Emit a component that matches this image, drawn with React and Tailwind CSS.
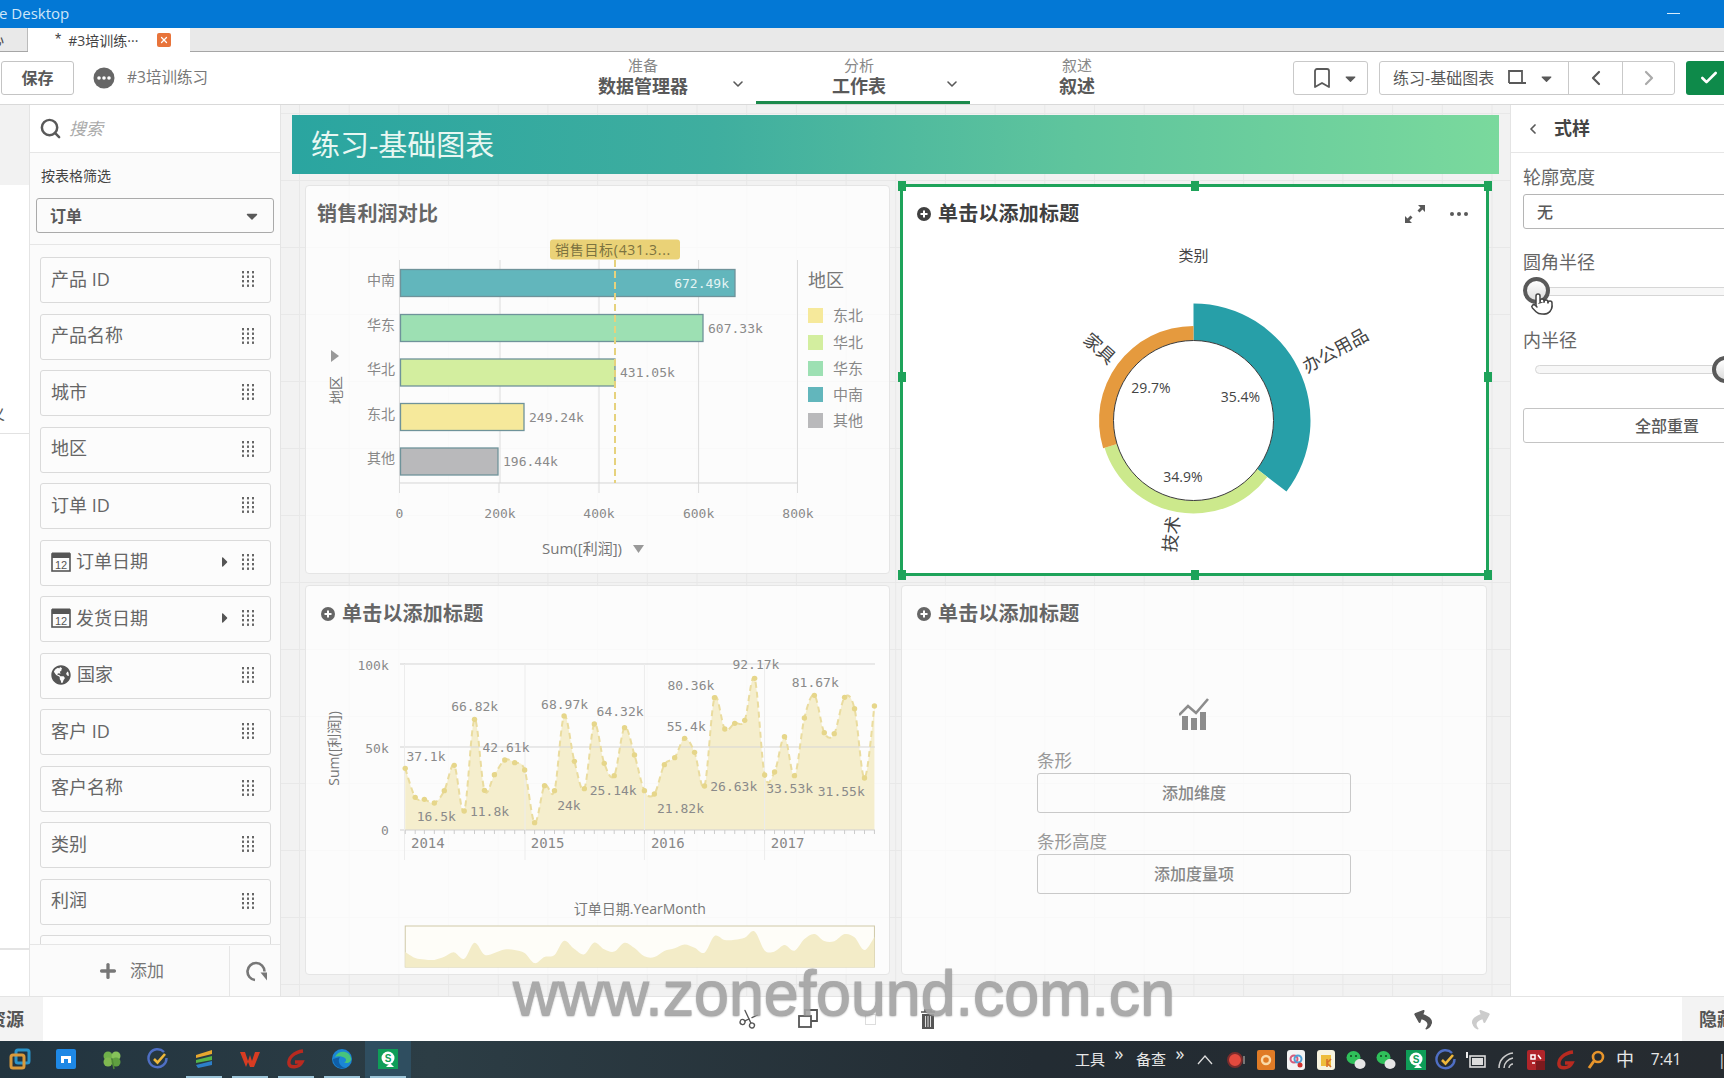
import React from "react";
import { Search, ChevronDown, ChevronLeft, ChevronRight, Check, Plus, Scissors, Bookmark, Pointer, X } from "lucide-react";
import { FaGlobeAmericas, FaCaretDown, FaCaretRight, FaReply, FaShare } from "react-icons/fa";

const T = ({ x, y, className = "", anchor = "start", rotate, children }) => (
  <text x={x} y={y} textAnchor={anchor} dominantBaseline="central" className={className} transform={rotate !== undefined ? `rotate(${rotate} ${x} ${y})` : undefined}>{children}</text>
);

const Grip = () => (
  <svg width="14" height="18" viewBox="0 0 14 18" className="shrink-0">
    {[1, 6, 11].map((x) => [1, 5.5, 10, 14.5].map((y) => <rect key={x + "-" + y} x={x} y={y} width="2" height="2.4" fill="#666" />))}
  </svg>
);

const Cal = () => (
  <svg width="20" height="20" viewBox="0 0 20 20" className="shrink-0">
    <rect x="1" y="2" width="18" height="17" fill="none" stroke="#555" strokeWidth="1.6" />
    <rect x="1" y="0.5" width="18" height="5.5" fill="#555" />
    <text x="10" y="12.500" textAnchor="middle" dominantBaseline="central" className="fill-[#555] text-[11px] [font-family:'Liberation_Sans',sans-serif]">12</text>
  </svg>
);

const fields = [
  { t: "产品 ID" }, { t: "产品名称" }, { t: "城市" }, { t: "地区" }, { t: "订单 ID" },
  { t: "订单日期", k: "cal" }, { t: "发货日期", k: "cal" }, { t: "国家", k: "globe" },
  { t: "客户 ID" }, { t: "客户名称" }, { t: "类别" }, { t: "利润" }, { t: "" },
];

const Field = ({ f }) => (
  <div className="flex h-[46px] w-[231px] shrink-0 items-center rounded-[3px] border border-[#dadada] bg-[#fcfcfc] pb-[2px] pl-[10px] pr-[15px] text-[18px] text-[#666]">
    {f.k === "cal" && <span className="mr-[5px]"><Cal /></span>}
    {f.k === "globe" && <FaGlobeAmericas className="mr-[6px] shrink-0 text-[#555]" size={20} />}
    <span className="flex-1">{f.t}</span>
    {f.k === "cal" && <FaCaretRight className="mr-[8px] text-[#555]" size={16} />}
    {f.t && <Grip />}
  </div>
);

const pts = [[275,415],[301,502],[325,508],[351,519],[377,482],[403,406],[429,543],[456,268],[482,481],[508,434],[535,390],[561,398],[587,420],[613,578],[639,467],[665,482],[690,258],[717,394],[743,476],[769,282],[795,400],[821,437],[848,293],[874,375],[900,482],[926,492],[952,404],[979,383],[1005,325],[1031,367],[1057,468],[1083,203],[1110,297],[1136,280],[1162,271],[1188,145],[1214,435],[1240,426],[1266,320],[1292,437],[1318,264],[1344,196],[1370,308],[1396,311],[1423,202],[1449,236],[1475,444],[1501,228]];
const fx = (v) => 300 + v / 2.613;
const fy = (v) => 630 + v / 3;
const smooth = (p) => {
  let d = `M${p[0][0].toFixed(1)} ${p[0][1].toFixed(1)}`;
  for (let i = 0; i < p.length - 1; i++) {
    const a = p[Math.max(i - 1, 0)], b = p[i], c = p[i + 1], e = p[Math.min(i + 2, p.length - 1)];
    d += `C${(b[0] + (c[0] - a[0]) / 6).toFixed(1)} ${(b[1] + (c[1] - a[1]) / 6).toFixed(1)} ${(c[0] - (e[0] - b[0]) / 6).toFixed(1)} ${(c[1] - (e[1] - b[1]) / 6).toFixed(1)} ${c[0].toFixed(1)} ${c[1].toFixed(1)}`;
  }
  return d;
};
const P = pts.map(([x, y]) => [fx(x), fy(y)]);
const linePath = smooth(P);
const areaPath = linePath + `L${fx(1501)} 830L${fx(275)} 830Z`;
const miniP = pts.map(([x, y], i) => {
  const a = pts[Math.max(i - 1, 0)][1], c = pts[Math.min(i + 1, pts.length - 1)][1];
  const s = y * 0.8 + (a + c) * 0.1;
  return [fx(x), fy(1012 - (600 - s) * 0.26)];
});
const miniPath = smooth(miniP) + `L${fx(1501)} ${fy(1012)}L${fx(275)} ${fy(1012)}Z`;

const lineLabels = [["37.1k",278,380],["16.5k",305,560],["66.82k",395,230],["42.61k",477,353],["11.8k",444,545],["68.97k",630,222],["64.32k",775,245],["24k",672,525],["25.14k",757,480],["80.36k",960,165],["55.4k",958,288],["21.82k",933,534],["26.63k",1072,470],["92.17k",1130,103],["81.67k",1285,158],["33.53k",1218,476],["31.55k",1353,485]];

const rad = (a) => ((a - 90) * Math.PI) / 180;
const arc = (cx, cy, r0, r1, a0, a1) => {
  const p = (r, a) => `${(cx + r * Math.cos(rad(a))).toFixed(2)} ${(cy + r * Math.sin(rad(a))).toFixed(2)}`;
  const l = a1 - a0 > 180 ? 1 : 0;
  return `M${p(r1, a0)}A${r1} ${r1} 0 ${l} 1 ${p(r1, a1)}L${p(r0, a1)}A${r0} ${r0} 0 ${l} 0 ${p(r0, a0)}Z`;
};

const bars = [
  { n: "中南", y: 269, w: 735, f: "#62b6bc", v: "672.49k", inside: true },
  { n: "华东", y: 314, w: 703, f: "#9de0b3", v: "607.33k" },
  { n: "华北", y: 358.5, w: 615, f: "#d3ee9f", v: "431.05k" },
  { n: "东北", y: 403, w: 524, f: "#f6e99b", v: "249.24k" },
  { n: "其他", y: 447.5, w: 498, f: "#b9b9bb", v: "196.44k" },
];
const legend = [["东北","#f6e99b",308],["华北","#d3ee9f",335],["华东","#9de0b3",361],["中南","#62b6bc",387],["其他","#b9b9bb",413]];

const Card = ({ children, extra = "bg-white/75 border-[#e5e5e5]" }) => (
  <div className={"relative flex flex-col rounded-[4px] border " + extra}>{children}</div>
);

const Title = ({ plus = true, dark, children, right }) => (
  <div className={"flex h-[50px] shrink-0 items-center pl-[11px] pt-[5px] text-[20px] font-bold tracking-[0.2px] " + (dark ? "text-[#404040]" : "text-[#666]")}>
    {plus && (
      <svg width="16" height="16" viewBox="0 0 16 16" className="mr-[6px] ml-[3px] shrink-0">
        <circle cx="8" cy="8" r="7" fill={dark ? "#404040" : "#666"} />
        <path d="M4.5 8h7M8 4.5v7" stroke="#fff" strokeWidth="2" />
      </svg>
    )}
    <span className="flex-1">{children}</span>
    {right}
  </div>
);

const Handles = () => {
  const base = "absolute h-[10px] w-[8px] bg-[#1ea35a]";
  return (
    <div className="pointer-events-none absolute bottom-[-3px] left-[-2px] right-[-3px] top-[-2px] border-[3px] border-[#1ea35a]">
      <span className={base + " left-[-5.500px] top-[-6.500px]"} />
      <span className={base + " left-1/2 top-[-6.500px] -translate-x-1/2"} />
      <span className={base + " right-[-5.500px] top-[-6.500px]"} />
      <span className={base + " left-[-5.500px] top-[calc(50%-8px)]"} />
      <span className={base + " right-[-5.500px] top-[calc(50%-8px)]"} />
      <span className={base + " bottom-[-6.500px] left-[-5.500px]"} />
      <span className={base + " bottom-[-6.500px] left-1/2 -translate-x-1/2"} />
      <span className={base + " bottom-[-6.500px] right-[-5.500px]"} />
    </div>
  );
};

const mono = "[font-family:'DejaVu_Sans_Mono',monospace] text-[13px] fill-[#8a8a8a]";

const BarChart = () => (
  <svg width="583" height="337" viewBox="306 236 583 337" className="block">
    <rect x="550" y="239.5" width="130" height="20" rx="3" fill="#ead277" />
    <T x="555" y="249.5" className="fill-[#7c7340] text-[14px] tracking-[0.7px]">销售目标(431.3...</T>
    {[399.5, 500, 599, 698.6, 797.5].map((x) => <path key={x} d={`M${x} 260V483`} stroke="#dcdcdc" />)}
    <path d="M399.5 483H797.5" stroke="#d5d5d5" />
    {[399.5, 499, 599, 698.6, 797.5].map((x) => <path key={x} d={`M${x} 483V493`} stroke="#dcdcdc" />)}
    {bars.map((b) => (
      <g key={b.n}>
        <T x="395" y={b.y + 10} anchor="end" className="fill-[#888] text-[14px]">{b.n}</T>
        <rect x="400.5" y={b.y + 0.5} width={b.w - 400.5} height="27" fill={b.f} stroke="#6f939a" strokeWidth="1.3" />
        <T x={b.inside ? b.w - 6 : b.w + 5} y={b.y + 14} anchor={b.inside ? "end" : "start"} className={"[font-family:'DejaVu_Sans_Mono',monospace] text-[13px] " + (b.inside ? "fill-[#e4f4f4]" : "fill-[#8a8a8a]")}>{b.v}</T>
      </g>
    ))}
    <path d="M615 260V483" stroke="#e6d27d" strokeWidth="2" strokeDasharray="7 4" />
    {[["0",399.5],["200k",500],["400k",599],["600k",698.6],["800k",798]].map(([t, x]) => <T key={t} x={x} y="513" anchor="middle" className={mono}>{t}</T>)}
    <T x="582" y="548" anchor="middle" className="fill-[#777] text-[15px]">Sum([利润])</T>
    <path d="M633 545h11l-5.500 8z" fill="#999" />
    <T x="335" y="390" anchor="middle" rotate={-90} className="fill-[#777] text-[14px]">地区</T>
    <path d="M331 350l8 6-8 6z" fill="#999" />
    <T x="808" y="280" className="fill-[#777] text-[18px]">地区</T>
    {legend.map(([n, c, y]) => (
      <g key={n}>
        <rect x="808" y={y} width="15" height="15" fill={c} />
        <T x="833" y={y + 7} className="fill-[#888] text-[15px]">{n}</T>
      </g>
    ))}
  </svg>
);

const Donut = () => (
  <svg width="583" height="337" viewBox="902 236 583 337" className="block">
    <T x="1193.500" y="255" anchor="middle" className="fill-[#444] text-[15px]">类别</T>
    <path d={arc(1193.5, 420.5, 80, 117, 0, 127.4)} fill="#279fa8" />
    <path d={arc(1193.5, 420.5, 80, 93, 127.4, 253)} fill="#cce98c" />
    <path d={arc(1193.5, 420.5, 80, 94.5, 253, 360)} fill="#e59a3e" />
    <circle cx="1193.500" cy="420.500" r="80" fill="#fff" stroke="#3a3a3a" />
    <T x="1335" y="350" anchor="middle" rotate={-29} className="fill-[#444] text-[18px]">办公用品</T>
    <T x="1100" y="348" anchor="middle" rotate={42} className="fill-[#444] text-[18px]">家具</T>
    <T x="1171" y="534" anchor="middle" rotate={-83} className="fill-[#444] text-[18px]">技术</T>
    <T x="1240.500" y="396" anchor="middle" className="fill-[#444] text-[14px]">35.4%</T>
    <T x="1151" y="387" anchor="middle" className="fill-[#444] text-[14px]">29.7%</T>
    <T x="1183" y="476" anchor="middle" className="fill-[#444] text-[14px]">34.9%</T>
  </svg>
);

const LineChart = () => (
  <svg width="583" height="338" viewBox="306 636 583 338" className="block">
    <path d={areaPath} fill="#f5eecd" />
    <path d={`M404.500 664H875M404.500 747H875`} stroke="#d5d5d5" />
    <path d={`M400 664h5M400 747h5M400 830h475`} stroke="#d0d0d0" />
    {[273, 588, 900, 1214].map((x) => <path key={x} d={`M${fx(x)} 664V860`} stroke="#ececec" />)}
    {pts.map(([x], i) => <path key={i} d={`M${fx(x)} 830v4`} stroke="#ccc" />)}
    <path d={linePath} fill="none" stroke="#eadc9f" strokeWidth="2" strokeDasharray="6 4" />
    {P.map(([x, y], i) => <circle key={i} cx={x} cy={y} r="2.700" fill="#e6d68a" />)}
    {lineLabels.map(([t, x, y]) => <T key={t} x={fx(x)} y={fy(y)} className={mono}>{t}</T>)}
    {[["100k",105],["50k",355],["0",600]].map(([t, y]) => <T key={t} x={fx(232)} y={fy(y)} anchor="end" className={mono}>{t}</T>)}
    {[["2014",290],["2015",603],["2016",917],["2017",1230]].map(([t, x]) => <T key={t} x={fx(x)} y={fy(640)} className="[font-family:'DejaVu_Sans_Mono',monospace] text-[14px] fill-[#888]">{t}</T>)}
    <T x={fx(88)} y={fy(355)} anchor="middle" rotate={-90} className="fill-[#777] text-[14px]">Sum([利润])</T>
    <T x={fx(888)} y={fy(835)} anchor="middle" className="fill-[#777] text-[14px]">订单日期.YearMonth</T>
    <rect x={fx(275)} y={fy(888)} width={(1501 - 275) / 2.613} height="41" fill="#fefdf8" stroke="#cfc9a8" />
    <path d={miniPath} fill="#f3ecc8" />
  </svg>
);

const Sq = ({ children }) => <svg width="22" height="22" viewBox="0 0 22 22">{children}</svg>;
const Qlik = ({ s = 22 }) => (
  <svg width={s} height={s} viewBox="0 0 22 22">
    <rect x="1" y="1" width="20" height="20" fill="#0f9d58" />
    <circle cx="11" cy="10" r="6.500" fill="#fff" />
    <path d="M13 15l4 4H9z" fill="#fff" />
    <text x="11" y="10.500" textAnchor="middle" dominantBaseline="central" className="fill-[#0f9d58] text-[10px] font-bold [font-family:'Liberation_Sans',sans-serif]">S</text>
  </svg>
);
const Tick = () => (
  <Sq>
    <path d="M17 4A9 9 0 1 0 19.500 10" fill="none" stroke="#4f6fc4" strokeWidth="2.400" />
    <path d="M7 11l3.500 3.500L18 6" fill="none" stroke="#efb73a" strokeWidth="2.600" />
  </Sq>
);
const RedG = () => (
  <Sq>
    <path d="M18 3C9 4 3 10 4 16c1 4 10 4 13-2l-7 0" fill="none" stroke="#b82a20" strokeWidth="3.400" />
  </Sq>
);
const Chat = () => (
  <Sq>
    <ellipse cx="8.500" cy="8.500" rx="7" ry="6.500" fill="#2fc05a" />
    <ellipse cx="15" cy="15" rx="5.500" ry="5" fill="#e6e6e6" />
    <circle cx="6" cy="7" r="1" fill="#13451f" /><circle cx="11" cy="7" r="1" fill="#13451f" />
  </Sq>
);

const taskIcons = [
  <Sq key="1"><rect x="7" y="2" width="13" height="13" rx="2" fill="none" stroke="#2a93c9" strokeWidth="3" /><rect x="2" y="7" width="13" height="13" rx="2" fill="none" stroke="#d99a3b" strokeWidth="3" /></Sq>,
  <Sq key="2"><rect x="1" y="1" width="20" height="20" rx="2" fill="#1e88e5" /><path d="M6 15V8h10v7h-3v-4H9v4z" fill="#fff" /></Sq>,
  <Sq key="3"><circle cx="7" cy="8" r="4.500" fill="#6fb04a" /><circle cx="15" cy="8" r="4.500" fill="#86c25a" /><circle cx="7" cy="14" r="4.500" fill="#7fb850" /><circle cx="15" cy="14" r="4.500" fill="#5fa040" /><path d="M11 11l2 10" stroke="#4f8a35" strokeWidth="1.500" /></Sq>,
  <Tick key="4" />,
  <Sq key="5"><path d="M3 7L19 2v4L3 10z" fill="#e7a72f" /><path d="M3 12l16-4v4L3 15z" fill="#57b548" /><path d="M3 17l16-4v4L5 20z" fill="#2d7fc9" /></Sq>,
  <Sq key="6"><path d="M1 4h5l3 9 2-6 2 6 3-9h5l-6 15h-4l-2-5-2 5H7z" fill="#d83c22" /></Sq>,
  <RedG key="7" />,
  <Sq key="8"><circle cx="11" cy="11" r="10" fill="#1b86d6" /><path d="M4 9c3-7 14-7 16 1 1 5-5 6-7 4 2 0 3-2 1-4-3-2-8-2-10 -1z" fill="#47c47c" /><path d="M9 9c-3 4 0 10 6 11-7 2-13-3-13-9z" fill="#0f5fa8" /></Sq>,
  <Qlik key="9" />,
];
const trayIcons = [
  <Sq key="a"><circle cx="10" cy="11" r="7" fill="#e34a3e" stroke="#7a2c2c" strokeWidth="2" /><path d="M19 7v8" stroke="#777" strokeWidth="2" /></Sq>,
  <Sq key="b"><rect x="2" y="1" width="18" height="20" rx="2" fill="#e07b26" /><circle cx="11" cy="11" r="4" fill="none" stroke="#f9d9a8" strokeWidth="2.400" /></Sq>,
  <Sq key="c"><rect x="2" y="1" width="18" height="20" rx="3" fill="#f3f3f3" /><circle cx="9" cy="10" r="3.500" fill="none" stroke="#d65a7a" strokeWidth="2" /><circle cx="13" cy="10" r="3.500" fill="none" stroke="#4f9fd6" strokeWidth="2" /><circle cx="15" cy="16" r="2.500" fill="#d3322f" /></Sq>,
  <Sq key="d"><rect x="2" y="1" width="18" height="20" rx="3" fill="#f7f3df" /><rect x="6" y="6" width="10" height="11" fill="#eebd3b" /><path d="M12 10v8M12 14l4-4M12 14l4 4" stroke="#d8702a" strokeWidth="1.600" /></Sq>,
  <Chat key="e" />, <Chat key="f" />, <Qlik key="g" />, <Tick key="h" />,
  <Sq key="i"><rect x="5" y="7" width="15" height="11" fill="none" stroke="#ddd" strokeWidth="1.600" /><rect x="7" y="9" width="11" height="7" fill="#ddd" /><path d="M2 3v6" stroke="#eee" strokeWidth="2" /></Sq>,
  <Sq key="j"><path d="M4 19C4 11 10 5 18 4M9 19c0-5 4-9 9-10M14 19c0-2 2-4 4-4" fill="none" stroke="#ccc" strokeWidth="1.500" /></Sq>,
  <Sq key="k"><rect x="2" y="1" width="18" height="20" rx="2" fill="#b0252a" /><path d="M6 6h4v4H6zM13 6l3 4M7 14h3" stroke="#fff" strokeWidth="1.500" fill="none" /><rect x="11" y="12" width="9" height="9" fill="#7d1a1e" /></Sq>,
  <RedG key="l" />,
  <Sq key="m"><circle cx="13" cy="8" r="5" fill="none" stroke="#e8952c" strokeWidth="2.600" /><path d="M9 12l-5 7" stroke="#e8952c" strokeWidth="3" /></Sq>,
];

export default function App() {
  return (
    <div className="relative flex h-[1078px] w-[1724px] flex-col overflow-hidden bg-white [font-family:'Open_Sans','Noto_Sans_CJK_SC',sans-serif] text-[#595959]">
      {/* title bar */}
      <div className="flex h-[28px] shrink-0 items-center justify-between bg-[#0378d5] pb-[2px] text-[15px] text-[#cfe6f8]">
        <span className="-ml-[1px]">e Desktop</span>
        <span className="mr-[44px] h-[1px] w-[13px] bg-[#d8ecfb]" />
      </div>
      {/* tab bar */}
      <div className="flex h-[24px] shrink-0 border-b border-[#a6a6a6] bg-[#e9e9e9] text-[14px]">
        <div className="w-[28px] overflow-hidden border-r border-[#bbb] text-[#444]"><span className="-ml-[10px] block">心</span></div>
        <div className="-mb-[1px] flex w-[162px] items-center bg-white text-[#444]">
          <span className="ml-[27px] mr-[7px] text-[16px] [font-family:'Liberation_Sans',sans-serif]">*</span>
          <span className="w-[82px] truncate">#3培训练···</span>
          <span className="ml-[7px] flex h-[14px] w-[14px] items-center justify-center rounded-[2px] bg-[#e8743b] text-white"><X size={10} strokeWidth={3} /></span>
        </div>
      </div>
      {/* toolbar */}
      <div className="flex h-[53px] shrink-0 border-b border-[#d9d9d9] bg-white">
        <div className="flex w-[530px] items-center pb-[1px]">
          <div className="ml-[1px] flex h-[34px] w-[73px] items-center justify-center rounded-[3px] border border-[#c4c4c4] text-[16px] font-bold text-[#595959]">保存</div>
          <svg width="22" height="22" viewBox="0 0 22 22" className="ml-[19px]">
            <circle cx="11" cy="11" r="10.500" fill="#666" />
            <circle cx="6" cy="11" r="1.800" fill="#fff" /><circle cx="11" cy="11" r="1.800" fill="#fff" /><circle cx="16" cy="11" r="1.800" fill="#fff" />
          </svg>
          <span className="ml-[12px] text-[15.500px] text-[#777]">#3培训练习</span>
        </div>
        <div className="relative flex w-[226px] flex-col items-center pt-[3px] leading-[20px]">
          <span className="text-[15px] text-[#888]">准备</span>
          <span className="text-[18px] font-bold leading-[22px] text-[#595959]">数据管理器</span>
          <ChevronDown className="absolute left-[200px] top-[24px] text-[#595959]" size={16} strokeWidth={2.4} />
        </div>
        <div className="relative flex w-[214px] flex-col items-center border-b-[3px] border-[#1c8a4c] pr-[8px] pt-[3px] leading-[20px]">
          <span className="text-[15px] text-[#888]">分析</span>
          <span className="text-[18px] font-bold leading-[22px] text-[#595959]">工作表</span>
          <ChevronDown className="absolute left-[188px] top-[24px] text-[#595959]" size={16} strokeWidth={2.4} />
        </div>
        <div className="flex w-[214px] flex-col items-center pt-[3px] leading-[20px]">
          <span className="text-[15px] text-[#888]">叙述</span>
          <span className="text-[18px] font-bold leading-[22px] text-[#595959]">叙述</span>
        </div>
        <div className="ml-[109px] flex h-[34px] w-[75px] items-center justify-center gap-[8px] self-center rounded-[3px] border border-[#c9c9c9] pl-[7px]">
          <Bookmark size={24} strokeWidth={1.8} />
          <FaCaretDown size={17} className="text-[#595959]" />
        </div>
        <div className="ml-[11px] flex h-[34px] w-[296px] items-center self-center rounded-[3px] border border-[#c9c9c9] text-[16px]">
          <div className="flex w-[188px] items-center pl-[13px]">
            <span className="flex-1">练习-基础图表</span>
            <svg width="22" height="20" viewBox="0 0 22 20"><path d="M3 15V3h13v12M3 15h17" fill="none" stroke="#595959" strokeWidth="1.800" /></svg>
            <FaCaretDown size={17} className="ml-[10px] mr-[13px]" />
          </div>
          <div className="flex h-full w-[54px] items-center justify-center border-l border-[#c9c9c9]"><ChevronLeft size={24} strokeWidth={2.2} /></div>
          <div className="flex h-full flex-1 items-center justify-center border-l border-[#c9c9c9] text-[#aaa]"><ChevronRight size={24} strokeWidth={2.2} /></div>
        </div>
        <div className="ml-[11px] flex h-[34px] flex-1 items-center self-center rounded-l-[3px] bg-[#0e8a4a] pl-[13px] text-white"><Check size={20} strokeWidth={3.2} /></div>
      </div>
      {/* main */}
      <div className="flex min-h-0 flex-1 border-b border-[#e4e4e4]">
        {/* rail */}
        <div className="flex w-[29px] shrink-0 flex-col bg-white">
          <div className="h-[80px] shrink-0 bg-[#f2f2f2]" />
          <div className="flex h-[249px] shrink-0 items-end overflow-hidden border-b border-[#e2e2e2] pb-[8px] text-[15px]"><span className="-ml-[10px]">义</span></div>
          <div className="flex-1" />
          <div className="h-[48px] shrink-0 border-t-2 border-[#e4e4e4]" />
        </div>
        {/* left panel */}
        <div className="flex w-[252px] shrink-0 flex-col border-x border-[#e4e4e4] bg-[#fbfbfb]">
          <div className="flex h-[48px] shrink-0 items-center border-b border-[#e6e6e6] bg-white pl-[9px]">
            <Search size={23} strokeWidth={2.6} className="text-[#595959]" />
            <span className="ml-[7px] text-[17px] italic text-[#aaa]">搜索</span>
          </div>
          <div className="h-[92px] shrink-0 border-b border-[#e6e6e6]">
            <div className="pl-[11px] pt-[11px] text-[14px] leading-[24px] text-[#444]">按表格筛选</div>
            <div className="ml-[6px] mt-[10px] flex h-[35px] w-[238px] items-center justify-between rounded-[3px] border border-[#aaa] pl-[13px] pr-[12px] text-[16px] font-bold text-[#595959]">
              <span>订单</span>
              <FaCaretDown size={18} />
            </div>
          </div>
          <div className="flex min-h-0 flex-1 flex-col gap-[10.500px] overflow-hidden pl-[10px] pt-[12px]">
            {fields.map((f, i) => <Field key={i} f={f} />)}
          </div>
          <div className="flex h-[52px] shrink-0 items-center border-t border-[#e6e6e6] bg-[#fbfbfb] pt-[1px] text-[#777]">
            <div className="flex w-[199px] items-center pl-[67px]">
              <Plus size={22} strokeWidth={3.6} />
              <span className="ml-[11px] text-[17px]">添加</span>
            </div>
            <div className="flex h-full flex-1 items-center justify-center border-l border-[#e6e6e6] pl-[1px]">
              <svg width="22" height="22" viewBox="0 0 22 22"><path d="M10 20A8.500 8.500 0 1 1 19.500 11.500" fill="none" stroke="#777" strokeWidth="2.600" /><path d="M15.500 12.500h6.500v8z" fill="#777" /></svg>
            </div>
          </div>
        </div>
        {/* canvas */}
        <div className="flex w-[1229px] shrink-0 flex-col bg-[#f2f2f2] bg-[linear-gradient(to_right,#e8e8e8_1px,transparent_1px),linear-gradient(to_bottom,#e8e8e8_1px,transparent_1px)] bg-[size:49.700px_67px] bg-[position:18px_8px] pt-[10px]">
          <div className="ml-[11px] flex h-[59px] w-[1207px] shrink-0 items-center bg-[linear-gradient(to_right,#2aa5a0,#3fae9f_35%,#5fc59d_65%,#7ad99d)] pl-[19px] text-[29px] text-[#e8f7f2]">练习-基础图表</div>
          <div className="ml-[24px] mt-[11px] grid grid-cols-[585px_586px] grid-rows-[389px_390px] gap-[11px]">
            <Card>
              <Title plus={false}>销售利润对比</Title>
              <BarChart />
            </Card>
            <Card extra="bg-white border-transparent">
              <Title dark right={
                <div className="mr-[17px] flex items-center gap-[23px] text-[#595959]">
                  <svg width="22" height="22" viewBox="0 0 22 22"><path d="M14 2h7v7l-2.500-2.500-3 3-2-2 3-3zM8 20H1v-7l2.500 2.500 3-3 2 2-3 3z" fill="#595959" /></svg>
                  <svg width="20" height="6" viewBox="0 0 20 6"><circle cx="3" cy="3" r="2" fill="#595959" /><circle cx="10" cy="3" r="2" fill="#595959" /><circle cx="17" cy="3" r="2" fill="#595959" /></svg>
                </div>
              }>单击以添加标题</Title>
              <Donut />
              <Handles />
            </Card>
            <Card>
              <Title>单击以添加标题</Title>
              <LineChart />
            </Card>
            <Card>
              <Title>单击以添加标题</Title>
              <div className="flex flex-col items-center">
                <svg width="30" height="32" viewBox="0 0 30 32" className="mt-[62px]">
                  <path d="M3 18h6v14H3zM12 20h6v12h-6zM21 14h6v18h-6z" fill="#8c8c8c" />
                  <path d="M0 17L9 8l8 7L29 1" fill="none" stroke="#8c8c8c" strokeWidth="2.600" />
                </svg>
                <div className="mt-[18px] w-[314px] text-[17.500px] leading-[24px] text-[#999]">条形</div>
                <div className="mt-[1px] flex h-[40px] w-[314px] items-center justify-center rounded-[3px] border border-[#c9c9c9] text-[16px] font-medium text-[#888]">添加维度</div>
                <div className="mt-[16px] w-[314px] text-[17.500px] leading-[24px] text-[#999]">条形高度</div>
                <div className="mt-[1px] flex h-[40px] w-[314px] items-center justify-center rounded-[3px] border border-[#c9c9c9] text-[16px] font-medium text-[#888]">添加度量项</div>
              </div>
            </Card>
          </div>
        </div>
        {/* right panel */}
        <div className="flex min-w-0 flex-1 flex-col overflow-hidden border-l border-[#e4e4e4] bg-white">
          <div className="flex h-[48px] shrink-0 items-center border-b border-[#e6e6e6] pl-[14px]">
            <ChevronLeft size={16} strokeWidth={2.6} />
            <span className="ml-[13px] text-[18px] font-bold text-[#444]">式样</span>
          </div>
          <div className="pl-[12px]">
            <div className="mt-[11px] text-[18px] leading-[26px] text-[#666]">轮廓宽度</div>
            <div className="mt-[4px] flex h-[35px] w-[300px] items-center rounded-[3px] border border-[#b5b5b5] pl-[13px] text-[16px] font-medium text-[#595959]">无</div>
            <div className="mt-[20px] text-[18px] leading-[26px] text-[#666]">圆角半径</div>
            <div className="relative mt-[2px] flex h-[28px] w-[300px] items-center">
              <div className="ml-[13px] h-[9px] flex-1 rounded-full border border-[#d6d6d6] bg-[#f7f7f7]" />
              <div className="absolute left-0 top-0 h-[27px] w-[27px] rounded-full border-[4px] border-[#595959] bg-[linear-gradient(#fff,#ddd)]" />
            </div>
            <div className="mt-[22px] text-[18px] leading-[26px] text-[#666]">内半径</div>
            <div className="relative mt-[3px] flex h-[27px] w-[300px] items-center">
              <div className="ml-[12px] h-[9px] w-[190px] rounded-full border border-[#d6d6d6] bg-[#f7f7f7]" />
              <div className="absolute left-[189px] top-0 h-[27px] w-[27px] rounded-full border-[4px] border-[#595959] bg-[linear-gradient(#fff,#ddd)]" />
            </div>
            <div className="mt-[25px] flex h-[35px] w-[288px] items-center justify-center rounded-[3px] border border-[#c4c4c4] text-[16px] font-medium text-[#595959]">全部重置</div>
          </div>
        </div>
      </div>
      {/* bottom bar */}
      <div className="flex h-[44px] shrink-0 items-center bg-white text-[#555]">
        <div className="flex h-full w-[43px] items-center overflow-hidden bg-[#f3f3f3]"><span className="-ml-[12px] whitespace-nowrap text-[18px] font-bold">资源</span></div>
        <Scissors size={20} strokeWidth={1.6} className="ml-[696px] rotate-[-70deg]" />
        <svg width="22" height="22" viewBox="0 0 22 22" className="ml-[38px]"><path d="M8 8V2h12v11h-6" fill="none" stroke="#555" strokeWidth="1.800" /><rect x="2" y="8" width="12" height="11" fill="none" stroke="#555" strokeWidth="1.800" /></svg>
        <span className="ml-[46px] h-[11px] w-[11px] border border-[#ddd]" />
        <svg width="16" height="22" viewBox="0 0 16 22" className="ml-[44px]"><path d="M1 4h14M5 4V2h6v2" fill="none" stroke="#555" strokeWidth="1.600" /><rect x="2" y="6" width="12" height="15" fill="#555" /><path d="M5.500 8v11M8 8v11M10.500 8v11" stroke="#ddd" /></svg>
        <FaReply size={20} className="ml-[477px] rotate-[20deg]" />
        <FaShare size={20} className="ml-[38px] -rotate-[20deg] text-[#ccc]" />
        <div className="ml-[191px] flex h-full flex-1 items-center overflow-hidden bg-[#f3f3f3] pl-[17px]"><span className="whitespace-nowrap text-[18px] font-bold">隐藏</span></div>
      </div>
      {/* taskbar */}
      <div className="flex h-[37px] shrink-0 bg-[linear-gradient(to_right,#22343f,#2c3d45_25%,#232c33_60%,#262b30)] text-[#e8e8e8]">
        <div className="-ml-[3px] flex">
          {taskIcons.map((ic, i) => (
            <div key={i} className={"flex w-[46px] flex-col items-center " + (i === 8 ? "bg-[#2f4e60]" : "")}>
              <div className="flex flex-1 items-center">{ic}</div>
              <span className={"h-[2px] w-[36px] " + (i >= 4 ? "bg-[#9cc4d8]" : "")} />
            </div>
          ))}
        </div>
        <div className="ml-[662px] flex items-center text-[15px]">
          <span className="w-[34px] text-center">工具</span>
          <span className="w-[24px] -translate-y-[6px] text-center text-[18px]">»</span>
          <span className="w-[40px] text-center">备查</span>
          <span className="w-[18px] -translate-y-[6px] text-center text-[18px]">»</span>
          <span className="flex w-[32px] justify-center"><svg width="16" height="10" viewBox="0 0 16 10"><path d="M1 9l7-8 7 8" fill="none" stroke="#ddd" strokeWidth="1.300" /></svg></span>
          {trayIcons.map((ic, i) => <span key={i} className="flex w-[30px] justify-center">{ic}</span>)}
          <span className="w-[28px] text-center text-[18px]">中</span>
          <span className="w-[54px] text-center text-[15.500px]">7:41</span>
          <span className="ml-[25px] text-[14px]">||</span>
        </div>
      </div>
      {/* overlays */}
      <div className="pointer-events-none absolute left-[513px] top-[957px] whitespace-nowrap text-[62.700px] leading-[72px] text-[#a3a3a3] opacity-90 [-webkit-text-stroke:1px_#a3a3a3] [font-family:'Liberation_Sans',sans-serif] [text-shadow:0_1px_2px_#777]">www.zonefound.com.cn</div>
      <Pointer size={24} strokeWidth={1.5} fill="#fff" className="pointer-events-none absolute left-[1530px] top-[292px] text-[#444]" />
    </div>
  );
}
